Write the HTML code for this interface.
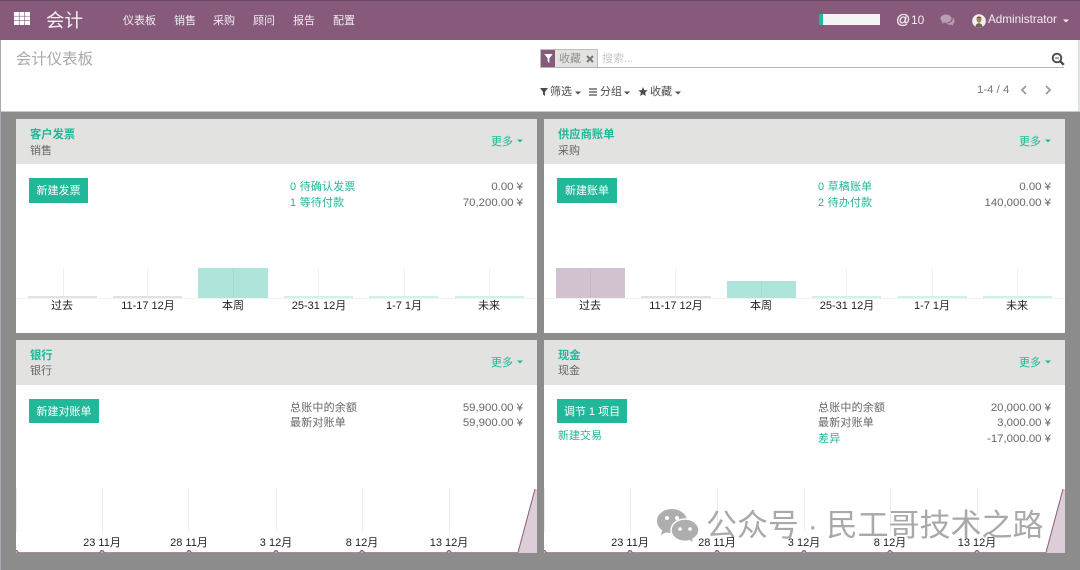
<!DOCTYPE html>
<html lang="zh">
<head>
<meta charset="utf-8">
<title>会计仪表板</title>
<style>
html,body{margin:0;padding:0;width:1080px;height:570px;overflow:hidden;background:#8c8c8c}
body{position:relative;font-family:"Liberation Sans","Noto Sans CJK SC",sans-serif;font-size:11px;color:#666}
.a{position:absolute;white-space:nowrap;line-height:16px;height:16px}
.nav{color:#f3edf2;font-size:11px;top:13px}
.t{color:#21b799}
.b{font-weight:bold;font-size:11.3px}
.r{text-align:right;font-size:11.4px}
.btn{position:absolute;background:#21b799;color:#fff;line-height:27px;text-align:center;font-size:11px;overflow:hidden}
.card{position:absolute;background:#fff;width:521px}
.hd{position:absolute;left:0;top:0;width:100%;height:45px;background:#e2e2e0}
.lb{color:#222;width:90px;text-align:center;font-size:11px}
svg{position:absolute;overflow:hidden}
</style>
</head>
<body>
<!-- top bar -->
<div style="position:absolute;left:0;top:0;width:1080px;height:40px;background:#875a7b;border-top:1px solid #6a4a62;box-sizing:border-box"></div>
<div style="position:absolute;left:0;top:40px;width:1078px;height:71px;background:#fff"></div>
<div style="position:absolute;left:1078px;top:40px;width:2px;height:71px;background:#dfe3e3"></div>
<div style="position:absolute;left:0;top:111px;width:1080px;height:1px;background:#c9c9c9"></div>
<div style="position:absolute;left:0;top:40px;width:1px;height:530px;background:#a8a8b0"></div>

<svg style="left:14px;top:12px" width="16" height="13" viewBox="0 0 16 13"><g fill="#fff"><rect x="0" y="0" width="4.900" height="3.900"/><rect x="5.500" y="0" width="4.900" height="3.900"/><rect x="11" y="0" width="5" height="3.900"/><rect x="0" y="4.500" width="4.900" height="3.900"/><rect x="5.500" y="4.500" width="4.900" height="3.900"/><rect x="11" y="4.500" width="5" height="3.900"/><rect x="0" y="9" width="4.900" height="4"/><rect x="5.500" y="9" width="4.900" height="4"/><rect x="11" y="9" width="5" height="4"/></g></svg>
<div class="a" style="left:46px;top:10px;font-size:18.500px;line-height:22px;height:22px;color:#f6f1f5">会计</div>
<div class="a nav" style="left:123px">仪表板</div>
<div class="a nav" style="left:174px">销售</div>
<div class="a nav" style="left:213px">采购</div>
<div class="a nav" style="left:253px">顾问</div>
<div class="a nav" style="left:293px">报告</div>
<div class="a nav" style="left:333px">配置</div>

<div style="position:absolute;left:819px;top:14px;width:61px;height:11px;background:#f4f4f4"></div>
<div style="position:absolute;left:819px;top:14px;width:4px;height:11px;background:#21b799"></div>
<div class="a" style="left:896px;top:11px;font-size:14px;color:#f3edf2;-webkit-text-stroke:.3px #f3edf2">@</div>
<div class="a" style="left:911px;top:12px;font-size:12px;color:#f3edf2">10</div>
<svg style="left:940px;top:14px" width="16" height="13" viewBox="0 0 16 13"><path d="M6 .5C2.900.5.500 2.300.500 4.600c0 1.300.800 2.400 2 3.200-.100.700-.500 1.300-1 1.800 1 0 2-.500 2.800-1.100.500.100 1.100.200 1.700.200 3.100 0 5.500-1.900 5.500-4.100S9.100.500 6 .500z" fill="#b79fb1"/><path d="M12.700 3.400c.100.400.200.800.200 1.200 0 2.800-2.800 4.800-6 4.800h-.800c.900.900 2.200 1.400 3.700 1.400.500 0 1-.100 1.500-.200.700.500 1.500.900 2.400.900-.400-.400-.700-.900-.900-1.500 1.100-.700 1.700-1.700 1.700-2.800 0-1.500-.700-2.900-1.800-3.800z" fill="#b79fb1"/></svg>
<svg style="left:972px;top:14px" width="14" height="14" viewBox="0 0 14 14"><circle cx="7" cy="7" r="6.800" fill="#f2efee"/><ellipse cx="7" cy="5.500" rx="2.500" ry="3.200" fill="#a8805f"/><path d="M4.300 4.200C4.800 2.200 9.200 2.200 9.700 4.200L9 3.800H5z" fill="#4a3a30"/><path d="M3.500 12.800c.300-2.500 1.500-3.500 3.500-3.500s3.200 1 3.500 3.500c-2 1-5 1-7 0z" fill="#6b6560"/></svg>
<div class="a" style="left:988px;top:12px;font-size:11.700px;color:#f3edf2">Administrator</div>
<svg style="left:1063px;top:19px" width="6" height="4" viewBox="0 0 6 4"><path d="M0 .500h6L3 3.500z" fill="#f3edf2"/></svg>

<!-- control panel -->
<div class="a" style="left:16px;top:50px;font-size:15.400px;line-height:20px;height:20px;color:#a9a9a9">会计仪表板</div>

<div style="position:absolute;left:540px;top:49px;width:58px;height:19px;background:#e2e2e0;border:1px solid #bdbdbd;box-sizing:border-box"></div>
<div style="position:absolute;left:541px;top:50px;width:14px;height:17px;background:#875a7b"></div>
<svg style="left:544px;top:54px" width="9" height="9" viewBox="0 0 9 9"><path d="M.300 0h8.400L5.400 4.200V9L3.600 7.600V4.200z" fill="#fff"/></svg>
<div class="a" style="left:559px;top:51px;color:#8f8f8f;font-size:11px">收藏</div>
<svg style="left:586px;top:55px" width="8" height="8" viewBox="0 0 8 8"><path d="M1 1l6 6M7 1L1 7" stroke="#777" stroke-width="2"/></svg>
<div class="a" style="left:602px;top:51px;color:#c6c6c6;font-size:11px">搜索...</div>
<div style="position:absolute;left:540px;top:67px;width:524px;height:1px;background:#b5b5b5"></div>
<svg style="left:1051px;top:52px" width="14" height="14" viewBox="0 0 14 14"><circle cx="6" cy="6" r="4.300" fill="none" stroke="#4c4c4c" stroke-width="1.900"/><path d="M9.300 9.300l3.500 3.500" stroke="#4c4c4c" stroke-width="2.400"/><path d="M4 6h4" stroke="#4c4c4c" stroke-width="1"/></svg>

<svg style="left:540px;top:88px" width="8" height="8" viewBox="0 0 8 8"><path d="M0 0h8L5 4v4L3 6.500V4z" fill="#4c4c4c"/></svg>
<div class="a" style="left:550px;top:84px;color:#4c4c4c">筛选</div>
<svg style="left:575px;top:91px" width="6" height="4" viewBox="0 0 6 4"><path d="M0 .500h6L3 3.500z" fill="#4c4c4c"/></svg>
<svg style="left:589px;top:88px" width="8" height="8" viewBox="0 0 8 8"><path d="M0 1h8M0 4h8M0 7h8" stroke="#4c4c4c" stroke-width="1.200"/></svg>
<div class="a" style="left:600px;top:84px;color:#4c4c4c">分组</div>
<svg style="left:624px;top:91px" width="6" height="4" viewBox="0 0 6 4"><path d="M0 .500h6L3 3.500z" fill="#4c4c4c"/></svg>
<svg style="left:638px;top:87px" width="10" height="9" viewBox="0 0 10 9"><path d="M5 0l1.300 3.100L9.700 3.400 7.100 5.600 7.900 9 5 7.200 2.100 9 2.900 5.600.300 3.400l3.400-.300z" fill="#4c4c4c"/></svg>
<div class="a" style="left:650px;top:84px;color:#4c4c4c">收藏</div>
<svg style="left:675px;top:91px" width="6" height="4" viewBox="0 0 6 4"><path d="M0 .500h6L3 3.500z" fill="#4c4c4c"/></svg>
<div class="a" style="left:977px;top:82px;color:#777;font-size:11.400px">1-4 / 4</div>
<svg style="left:1020px;top:85px" width="8" height="10" viewBox="0 0 8 10"><path d="M6 1L2 5l4 4" fill="none" stroke="#999" stroke-width="1.700"/></svg>
<svg style="left:1044px;top:85px" width="8" height="10" viewBox="0 0 8 10"><path d="M2 1l4 4-4 4" fill="none" stroke="#999" stroke-width="1.700"/></svg>

<!-- card 1 -->
<div class="card" style="left:16px;top:119px;height:214px"><div class="hd"></div></div>
<div class="a t b" style="left:30px;top:127px">客户发票</div>
<div class="a" style="left:30px;top:143px">销售</div>
<div class="a t" style="left:491px;top:134px">更多</div>
<svg style="left:517px;top:139px" width="6" height="4" viewBox="0 0 6 4"><path d="M0 .500h6L3 3.500z" fill="#21b799"/></svg>
<div class="btn" style="left:29px;top:178px;width:59px;height:25px">新建发票</div>
<div class="a t" style="left:290px;top:179px;letter-spacing:.2px">0 待确认发票</div>
<div class="a t" style="left:290px;top:195px;letter-spacing:.2px">1 等待付款</div>
<div class="a r" style="left:423px;width:100px;top:179px">0.00 ¥</div>
<div class="a r" style="left:423px;width:100px;top:195px">70,200.00 ¥</div>
<svg style="left:16px;top:262px" width="521" height="42" viewBox="0 0 521 42"><g fill="#f0f0f0"><rect x="47" y="6" width="1" height="30"/><rect x="131" y="6" width="1" height="30"/><rect x="302" y="6" width="1" height="30"/><rect x="388" y="6" width="1" height="30"/><rect x="473" y="6" width="1" height="30"/></g><rect x="12" y="34" width="69" height="2" fill="#e8dfe6"/><rect x="97" y="34" width="69" height="2" fill="#e8dfe6"/><rect x="182" y="6" width="70" height="31" fill="#aee4d9"/><rect x="217" y="6" width="1" height="31" fill="#a0dccf"/><rect x="268" y="34" width="69" height="2" fill="#d3f1eb"/><rect x="353" y="34" width="69" height="2" fill="#d3f1eb"/><rect x="439" y="34" width="69" height="2" fill="#d3f1eb"/><rect x="0" y="36" width="521" height="1" fill="#f2f2f2"/></svg>
<div class="a lb" style="left:17px;top:298px">过去</div>
<div class="a lb" style="left:103px;top:298px">11-17 12月</div>
<div class="a lb" style="left:188px;top:298px">本周</div>
<div class="a lb" style="left:274px;top:298px">25-31 12月</div>
<div class="a lb" style="left:359px;top:298px">1-7 1月</div>
<div class="a lb" style="left:444px;top:298px">未来</div>

<!-- card 2 -->
<div class="card" style="left:544px;top:119px;height:214px"><div class="hd"></div></div>
<div class="a t b" style="left:558px;top:127px">供应商账单</div>
<div class="a" style="left:558px;top:143px">采购</div>
<div class="a t" style="left:1019px;top:134px">更多</div>
<svg style="left:1045px;top:139px" width="6" height="4" viewBox="0 0 6 4"><path d="M0 .500h6L3 3.500z" fill="#21b799"/></svg>
<div class="btn" style="left:557px;top:178px;width:60px;height:25px">新建账单</div>
<div class="a t" style="left:818px;top:179px;letter-spacing:.2px">0 草稿账单</div>
<div class="a t" style="left:818px;top:195px;letter-spacing:.2px">2 待办付款</div>
<div class="a r" style="left:951px;width:100px;top:179px">0.00 ¥</div>
<div class="a r" style="left:951px;width:100px;top:195px">140,000.00 ¥</div>
<svg style="left:544px;top:262px" width="521" height="42" viewBox="0 0 521 42"><g fill="#f0f0f0"><rect x="47" y="6" width="1" height="30"/><rect x="131" y="6" width="1" height="30"/><rect x="302" y="6" width="1" height="30"/><rect x="388" y="6" width="1" height="30"/><rect x="473" y="6" width="1" height="30"/></g><rect x="12" y="6" width="69" height="31" fill="#d2c2d0"/><rect x="46" y="6" width="1" height="31" fill="#c7b6c5"/><rect x="97" y="34" width="70" height="2" fill="#e8dfe6"/><rect x="183" y="19" width="69" height="18" fill="#aee4d9"/><rect x="217" y="19" width="1" height="18" fill="#a0dccf"/><rect x="268" y="34" width="69" height="2" fill="#d3f1eb"/><rect x="354" y="34" width="69" height="2" fill="#d3f1eb"/><rect x="439" y="34" width="69" height="2" fill="#d3f1eb"/><rect x="0" y="36" width="521" height="1" fill="#f2f2f2"/></svg>
<div class="a lb" style="left:545px;top:298px">过去</div>
<div class="a lb" style="left:631px;top:298px">11-17 12月</div>
<div class="a lb" style="left:716px;top:298px">本周</div>
<div class="a lb" style="left:802px;top:298px">25-31 12月</div>
<div class="a lb" style="left:887px;top:298px">1-7 1月</div>
<div class="a lb" style="left:972px;top:298px">未来</div>

<!-- card 3 -->
<div class="card" style="left:16px;top:340px;height:213px"><div class="hd"></div></div>
<div class="a t b" style="left:30px;top:348px">银行</div>
<div class="a" style="left:30px;top:363px">银行</div>
<div class="a t" style="left:491px;top:355px">更多</div>
<svg style="left:517px;top:360px" width="6" height="4" viewBox="0 0 6 4"><path d="M0 .500h6L3 3.500z" fill="#21b799"/></svg>
<div class="btn" style="left:29px;top:399px;width:70px;height:24px;line-height:26px">新建对账单</div>
<div class="a" style="left:290px;top:400px;letter-spacing:.2px">总账中的余额</div>
<div class="a" style="left:290px;top:415px;letter-spacing:.2px">最新对账单</div>
<div class="a r" style="left:423px;width:100px;top:400px">59,900.00 ¥</div>
<div class="a r" style="left:423px;width:100px;top:415px">59,900.00 ¥</div>
<svg style="left:16px;top:486px" width="521" height="67" viewBox="0 0 521 67"><g fill="#ececec"><rect x="0" y="2" width="1" height="44"/><rect x="86" y="2" width="1" height="44"/><rect x="172" y="2" width="1" height="44"/><rect x="260" y="2" width="1" height="44"/><rect x="346" y="2" width="1" height="44"/><rect x="433" y="2" width="1" height="44"/></g><path d="M0 66H502L519 3H521V67H0z" fill="#dccdd8"/><path d="M0 66.500H502" fill="none" stroke="#a78a9f" stroke-width="1"/><path d="M502 66.500L519 3" fill="none" stroke="#875a7b" stroke-width="1"/><g fill="#c4a6bc" stroke="#875a7b"><circle cx="0" cy="66.500" r="2"/><circle cx="86" cy="66.500" r="2"/><circle cx="173" cy="66.500" r="2"/><circle cx="260" cy="66.500" r="2"/><circle cx="346" cy="66.500" r="2"/><circle cx="433" cy="66.500" r="2"/></g></svg>
<div class="a lb" style="left:57px;top:535px">23 11月</div>
<div class="a lb" style="left:144px;top:535px">28 11月</div>
<div class="a lb" style="left:231px;top:535px">3 12月</div>
<div class="a lb" style="left:317px;top:535px">8 12月</div>
<div class="a lb" style="left:404px;top:535px">13 12月</div>

<!-- card 4 -->
<div class="card" style="left:544px;top:340px;height:213px"><div class="hd"></div></div>
<div class="a t b" style="left:558px;top:348px">现金</div>
<div class="a" style="left:558px;top:363px">现金</div>
<div class="a t" style="left:1019px;top:355px">更多</div>
<svg style="left:1045px;top:360px" width="6" height="4" viewBox="0 0 6 4"><path d="M0 .500h6L3 3.500z" fill="#21b799"/></svg>
<div class="btn" style="left:557px;top:399px;width:70px;height:24px;line-height:26px">调节 1 项目</div>
<div class="a t" style="left:558px;top:428px">新建交易</div>
<div class="a" style="left:818px;top:400px;letter-spacing:.2px">总账中的余额</div>
<div class="a" style="left:818px;top:415px;letter-spacing:.2px">最新对账单</div>
<div class="a t" style="left:818px;top:431px;letter-spacing:.2px">差异</div>
<div class="a r" style="left:951px;width:100px;top:400px">20,000.00 ¥</div>
<div class="a r" style="left:951px;width:100px;top:415px">3,000.00 ¥</div>
<div class="a r" style="left:951px;width:100px;top:431px">-17,000.00 ¥</div>
<svg style="left:544px;top:486px" width="521" height="67" viewBox="0 0 521 67"><g fill="#ececec"><rect x="0" y="2" width="1" height="44"/><rect x="86" y="2" width="1" height="44"/><rect x="173" y="2" width="1" height="44"/><rect x="260" y="2" width="1" height="44"/><rect x="346" y="2" width="1" height="44"/><rect x="433" y="2" width="1" height="44"/></g><path d="M0 66H502L519 3H521V67H0z" fill="#dccdd8"/><path d="M0 66.500H502" fill="none" stroke="#a78a9f" stroke-width="1"/><path d="M502 66.500L519 3" fill="none" stroke="#875a7b" stroke-width="1"/><g fill="#c4a6bc" stroke="#875a7b"><circle cx="0" cy="66.500" r="2"/><circle cx="86" cy="66.500" r="2"/><circle cx="173" cy="66.500" r="2"/><circle cx="260" cy="66.500" r="2"/><circle cx="346" cy="66.500" r="2"/><circle cx="433" cy="66.500" r="2"/></g></svg>

<!-- watermark -->
<svg style="left:656px;top:508px" width="44" height="36" viewBox="0 0 44 36"><path d="M16 1C7.700 1 1 6.300 1 13c0 3.700 2 7 5.200 9.200L5 27l5.300-2.700c1.800.500 3.700.800 5.700.800 8.300 0 15-5.400 15-12S24.300 1 16 1z" fill="#aeaeae"/><path d="M29 11c-7.700 0-14 5-14 11.200S21.300 33.400 29 33.400c1.500 0 3-.200 4.400-.600L38 35l-1-4c3.600-2 6-5.200 6-8.800C43 16 36.700 11 29 11z" fill="#aeaeae" stroke="#fff" stroke-width="1.500"/><circle cx="11" cy="10" r="2" fill="#fff"/><circle cx="21" cy="10" r="2" fill="#fff"/><circle cx="24" cy="21" r="1.800" fill="#fff"/><circle cx="34" cy="21" r="1.800" fill="#fff"/></svg>
<div class="a" style="left:706px;top:506px;font-size:31px;line-height:40px;height:40px;color:#a9a9a9">公众号 · 民工哥技术之路</div>

<div class="a lb" style="left:585px;top:535px">23 11月</div>
<div class="a lb" style="left:672px;top:535px">28 11月</div>
<div class="a lb" style="left:759px;top:535px">3 12月</div>
<div class="a lb" style="left:845px;top:535px">8 12月</div>
<div class="a lb" style="left:932px;top:535px">13 12月</div>
</body>
</html>
